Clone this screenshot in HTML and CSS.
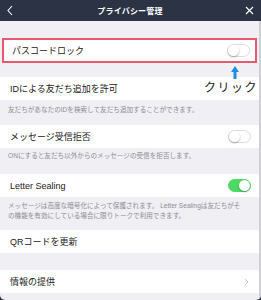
FILE: index.html
```html
<!DOCTYPE html>
<html lang="ja">
<head>
    <meta charset="UTF-8">
    <meta name="viewport" content="width=device-width, initial-scale=1.0">
    <title>プライバシー管理</title>
    <link rel="stylesheet" href="styles.css">
</head>
<body>
    <div class="screen">
        <header class="nav-bar">
            <span class="nav-icon">
                <svg width="8" height="11" viewBox="0 0 8 11"><path d="M6 1 L2 5.5 L6 10" fill="none" stroke="#fff" stroke-width="1.1"/></svg>
            </span>
            <h1>プライバシー管理</h1>
            <span class="nav-icon">
                <svg width="9" height="9" viewBox="0 0 9 9"><path d="M1 1 L8 8 M8 1 L1 8" fill="none" stroke="#fff" stroke-width="1.1"/></svg>
            </span>
        </header>

        <div class="settings">
            <div class="gap gap-top"></div>

            <div class="row row-marked">
                <span>パスコードロック</span>
                <span class="toggle"></span>
            </div>

            <div class="gap gap-mark"></div>

            <div class="row">
                <span>IDによる友だち追加を許可</span>
            </div>
            <p class="note">友だちがあなたのIDを検索して友だち追加することができます。</p>

            <div class="row">
                <span>メッセージ受信拒否</span>
                <span class="toggle"></span>
            </div>
            <p class="note note-end">ONにすると友だち以外からのメッセージの受信を拒否します。</p>

            <div class="row">
                <span>Letter Sealing</span>
                <span class="toggle toggle-on"></span>
            </div>
            <p class="note note-long">メッセージは高度な暗号化によって保護されます。 Letter Sealingは友だちがそ<br>の機能を有効にしている場合に限りトークで利用できます。</p>

            <div class="row">
                <span>QRコードを更新</span>
            </div>

            <div class="gap gap-section"></div>

            <div class="row">
                <span>情報の提供</span>
                <svg class="chevron" width="5" height="8" viewBox="0 0 5 8"><path d="M1 1 L4 4 L1 7" fill="none" stroke="#c7c7cc" stroke-width="1"/></svg>
            </div>
        </div>

        <div class="hint">
            <svg width="8" height="13" viewBox="0 0 8 13"><path d="M4 0 L8 6 L5.5 6 L5.5 13 L2.5 13 L2.5 6 L0 6 Z" fill="#1b8fe2"/></svg>
            <span>クリック</span>
        </div>
    </div>
</body>
</html>
```

FILE: styles.css
```css
:root {
    --nav-bg: #2b3345;
    --page-bg: #efeff4;
    --row-bg: #ffffff;
    --text-primary: #222222;
    --text-note: #8e8e93;
    --mark: #e8596d;
    --switch-on: #4cd964;
    --hint-blue: #1b8fe2;
}

* {
    margin: 0;
    padding: 0;
    box-sizing: border-box;
}

body {
    background: var(--nav-bg);
    font-family: "Liberation Sans", "Noto Sans CJK JP", sans-serif;
    width: 261px;
    height: 300px;
    overflow: hidden;
}

.screen {
    position: relative;
    width: 261px;
    height: 300px;
    background: var(--page-bg);
    border-radius: 0 0 5px 5px;
    overflow: hidden;
}

/* ナビゲーションバー */
.nav-bar {
    height: 21px;
    background: var(--nav-bg);
    display: flex;
    align-items: center;
    justify-content: space-between;
    padding: 0 6px 0 5px;
}

.nav-bar h1 {
    color: #fff;
    font-size: 8px;
    font-weight: bold;
    letter-spacing: 0.2px;
}

.nav-icon {
    display: flex;
    width: 10px;
    justify-content: center;
}

/* 設定リスト */
.settings {
    border-right: 2px solid #cfcfd4;
    height: 279px;
}

.gap-top { height: 17px; }
.gap-mark { height: 14px; }
.gap-section { height: 17px; }

.row {
    height: 23px;
    background: var(--row-bg);
    display: flex;
    align-items: center;
    justify-content: space-between;
    padding: 0 8px 0 10px;
    font-size: 9px;
    color: var(--text-primary);
}

.row-marked {
    height: 25px;
    margin: 0 2px;
    border: 2px solid var(--mark);
    padding: 0 5px 0 8px;
}

.note {
    font-size: 6.6px;
    line-height: 10px;
    color: var(--text-note);
    padding: 5px 8px 10px;
    white-space: nowrap;
}

.note-end {
    padding: 3px 8px 13px;
}

.note-long {
    padding: 4px 8px 9px;
}

.toggle {
    position: relative;
    width: 23px;
    height: 13px;
    border: 1px solid #dcdce0;
    border-radius: 7px;
    background: #fff;
}

.toggle::after {
    content: "";
    position: absolute;
    top: 0;
    left: 0;
    width: 11px;
    height: 11px;
    border-radius: 50%;
    background: #fff;
    box-shadow: 0 1px 2px rgba(0, 0, 0, 0.3);
}

.toggle-on {
    background: var(--switch-on);
    border-color: var(--switch-on);
}

.toggle-on::after {
    left: 10px;
}

.chevron {
    margin-right: 2px;
}

/* 注釈 */
.hint {
    position: absolute;
    left: 204px;
    top: 66px;
    display: flex;
    flex-direction: column;
    align-items: flex-start;
}

.hint svg {
    margin-left: 27px;
}

.hint span {
    font-family: "Noto Sans CJK JP", sans-serif;
    font-size: 12px;
    line-height: 16px;
    letter-spacing: 1.5px;
    color: var(--text-primary);
}
```
